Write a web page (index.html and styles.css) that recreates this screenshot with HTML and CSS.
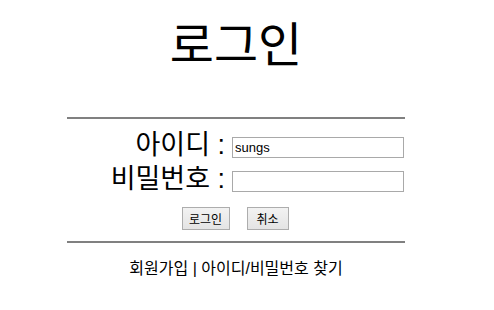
FILE: index.html
```html
<!DOCTYPE html>
<html lang="ko">
<head>
<meta charset="utf-8">
<title>로그인</title>
<link rel="stylesheet" href="styles.css">
</head>
<body>
<div class="wrap">
  <h1 class="title">로그인</h1>
  <hr class="rule">
  <form class="form">
    <div class="row">
      <label class="label" for="uid">아이디 :</label>
      <input class="field" id="uid" type="text" value="sungs">
    </div>
    <div class="row">
      <label class="label" for="pw">비밀번호 :</label>
      <input class="field" id="pw" type="password">
    </div>
    <div class="buttons">
      <button class="btn btn-login" type="button">로그인</button>
      <button class="btn btn-cancel" type="button">취소</button>
    </div>
  </form>
  <hr class="rule rule-bottom">
  <p class="links">회원가입 | 아이디/비밀번호 찾기</p>
</div>
</body>
</html>
```
FILE: styles.css
```css
html, body {
  margin: 0;
  padding: 0;
  background: #ffffff;
}
body {
  font-family: "Liberation Sans", "Noto Sans CJK KR", sans-serif;
  color: #000000;
}
.wrap {
  width: 338px;
  margin-left: 67px;
  padding-top: 22px;
}
.title {
  margin: 0;
  height: 48px;
  line-height: 48px;
  font-size: 48px;
  font-weight: normal;
  text-align: center;
}
.rule {
  margin: 47px 0 0 0;
  height: 0;
  border: 0;
  border-top: 2px solid #808080;
}
.form {
  margin: 0;
  padding-top: 18px;
  display: flex;
  flex-direction: column;
  gap: 13px;
}
.row {
  display: flex;
  align-items: center;
  height: 21px;
}
.label {
  width: 158px;
  margin-right: 7px;
  text-align: right;
  font-size: 27px;
  line-height: 21px;
  margin-bottom: 4px;
  white-space: nowrap;
}
.field {
  box-sizing: border-box;
  width: 172px;
  height: 21px;
  margin: 0;
  padding: 1px 2px;
  border: 1px solid #a9a9a9;
  font-family: "Liberation Sans", sans-serif;
  font-size: 13px;
  color: #000;
  outline: none;
}
.buttons {
  display: flex;
  justify-content: center;
  gap: 17px;
  margin-top: 2px;
  padding-right: 2px;
}
.btn {
  box-sizing: border-box;
  height: 23px;
  padding: 0;
  border: 1px solid #adadad;
  background: linear-gradient(#f2f2f2, #e4e4e4);
  font-family: "Noto Sans CJK KR", sans-serif;
  font-size: 12px;
  color: #000;
  border-radius: 0;
}
.btn-login { width: 48px; }
.btn-cancel { width: 42px; }
.rule-bottom {
  margin-top: 11px;
}
.links {
  margin: 15px 0 0 0;
  text-align: center;
  font-size: 16px;
  line-height: 22px;
}
```
